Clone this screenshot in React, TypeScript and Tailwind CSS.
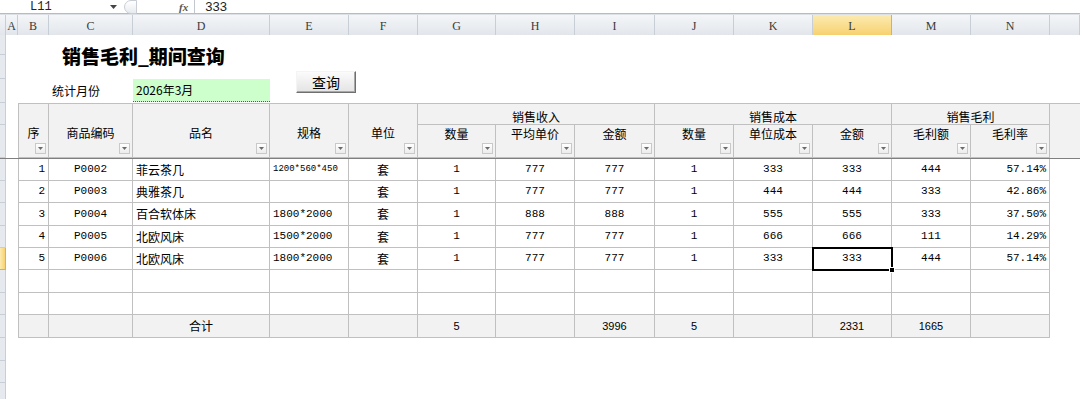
import React from 'react';

const TABLE_GRID =
  'grid grid-cols-[30px_84px_137px_79px_69px_78px_79px_80px_79px_79px_79px_79px_79px]';

const letters = ['', 'A', 'B', 'C', 'D', 'E', 'F', 'G', 'H', 'I', 'J', 'K', 'L', 'M', 'N', ''];

const rows: string[][] = [
  ['1', 'P0002', '菲云茶几', '1200*560*450', '套', '1', '777', '777', '1', '333', '333', '444', '57.14%'],
  ['2', 'P0003', '典雅茶几', '', '套', '1', '777', '777', '1', '444', '444', '333', '42.86%'],
  ['3', 'P0004', '百合软体床', '1800*2000', '套', '1', '888', '888', '1', '555', '555', '333', '37.50%'],
  ['4', 'P0005', '北欧风床', '1500*2000', '套', '1', '777', '777', '1', '666', '666', '111', '14.29%'],
  ['5', 'P0006', '北欧风床', '1800*2000', '套', '1', '777', '777', '1', '333', '333', '444', '57.14%'],
  ['', '', '', '', '', '', '', '', '', '', '', '', ''],
  ['', '', '', '', '', '', '', '', '', '', '', '', ''],
];

const totals = ['', '', '合计', '', '', '5', '', '3996', '5', '', '2331', '1665', ''];

const align = [
  'justify-end',
  'justify-center',
  'justify-start',
  'justify-start',
  'justify-center',
  'justify-center',
  'justify-center',
  'justify-center',
  'justify-center',
  'justify-center',
  'justify-center',
  'justify-center',
  'justify-end',
];

// heights of sheet rows below the frozen pane
const lowerHeights = ['h-[22px]', 'h-[22px]', 'h-[23px]', 'h-[22px]', 'h-[22px]', 'h-[23px]', 'h-[22px]', 'h-[23px]', 'h-[23px]', 'h-[22px]', 'h-[22px]'];
const upperHeights = ['h-[20px]', 'h-[24px]', 'h-[24px]', 'h-[22px]', 'h-[33px]'];

function FilterBtn() {
  return (
    <span className="absolute right-[2px] bottom-[3px] w-[11px] h-[11px] border border-[#c9c9c9] bg-gradient-to-b from-white to-[#ececec] flex items-center justify-center">
      <svg width="5" height="3" viewBox="0 0 5 3">
        <path d="M0 0H5L2.5 3Z" fill="#6b6b6b" />
      </svg>
    </span>
  );
}

function FormulaBar() {
  return (
    <div className="h-[14px] flex items-center border-b border-[#b4bcc6] bg-white">
      <div className="w-[110px] pl-[30px] font-['Liberation_Mono',monospace] text-[12px] leading-[12px] text-[#222]">L11</div>
      <svg width="7" height="4" viewBox="0 0 7 4" className="mt-[1px]">
        <path d="M0 0H7L3.5 4Z" fill="#444" />
      </svg>
      <div className="ml-[7px] w-[13px] h-[14px] rounded-l-full border border-[#c9ced5] bg-gradient-to-b from-white to-[#e8ebef]" />
      <div className="ml-[42px] font-['Liberation_Serif',serif] italic font-bold text-[11px] leading-[12px] text-[#555]">fx</div>
      <div className="ml-[6px] h-full border-l border-[#c3c8cf]" />
      <div className="ml-[10px] font-['Liberation_Sans',sans-serif] text-[13px] leading-[12px] text-[#222]">333</div>
    </div>
  );
}

function ColumnHeaders() {
  return (
    <div className="grid grid-cols-[6px_12px_31px_84px_137px_79px_69px_78px_79px_80px_79px_79px_79px_79px_79px_1fr] h-[21px] border-t border-[#dde1e6] border-b border-b-[#b9c0c9] font-['Liberation_Serif',serif] text-[12px] text-[#3b3b3b]">
      {letters.map((l, i) =>
        l === 'L' ? (
          <div key={i} className="flex items-center justify-center pt-[2px] border-r border-[#e3ad48] bg-gradient-to-b from-[#fcebb0] to-[#f7d16e]">
            {l}
          </div>
        ) : (
          <div key={i} className="flex items-center justify-center pt-[2px] border-r border-[#c8ced6] bg-gradient-to-b from-[#f4f6f8] to-[#e2e6eb]">
            {l}
          </div>
        ),
      )}
    </div>
  );
}

function TableHeader() {
  const singles = ['序', '商品编码', '品名', '规格', '单位'];
  const groups: [string, string][] = [
    ['销售收入', 'col-span-3'],
    ['销售成本', 'col-span-3'],
    ['销售毛利', 'col-span-2'],
  ];
  const subs = ['数量', '平均单价', '金额', '数量', '单位成本', '金额', '毛利额', '毛利率'];
  return (
    <div className={`${TABLE_GRID} grid-rows-[21px_33px] ml-[12px] border-l border-t border-[#c0c0c0] bg-[#f2f2f2] text-[12px] leading-[14px]`}>
      {singles.map((s) => (
        <div key={s} className="row-span-2 relative border-r border-b border-[#c0c0c0] text-center pt-[22px]">
          {s}
          <FilterBtn />
        </div>
      ))}
      {groups.map(([g, span]) => (
        <div key={g} className={`${span} border-r border-b border-[#c0c0c0] text-center pt-[6px]`}>
          {g}
        </div>
      ))}
      {subs.map((s, i) => (
        <div key={i} className="relative border-r border-b border-[#c0c0c0] text-center pt-[2px]">
          {s}
          <FilterBtn />
        </div>
      ))}
    </div>
  );
}

function cellFont(col: number, value: string) {
  if (col === 2 || col === 4) return "font-['Noto_Sans_CJK_SC',sans-serif] text-[12px]";
  if (value.length > 10) return "font-['Liberation_Mono',monospace] text-[9px]";
  return "font-['Liberation_Mono',monospace] text-[11px]";
}

function DataRow({ values, selected }: { values: string[]; selected?: boolean }) {
  return (
    <div className={`${TABLE_GRID} h-full border-l border-[#c0c0c0] bg-white`}>
      {values.map((v, c) => (
        <div
          key={c}
          className={`flex items-center ${align[c]} px-[3px] border-r border-b border-[#c0c0c0] ${cellFont(c, v)} ${selected && c === 10 ? 'relative' : ''}`}
        >
          {v}
          {selected && c === 10 && (
            <span className="absolute -left-[1px] -top-[1px] w-[81px] h-[24px] border-2 border-black">
              <span className="absolute -right-[4px] -bottom-[4px] w-[6px] h-[6px] bg-black border border-white" />
            </span>
          )}
        </div>
      ))}
    </div>
  );
}

function TotalRow() {
  return (
    <div className={`${TABLE_GRID} h-full border-l border-[#c0c0c0] bg-[#f2f2f2]`}>
      {totals.map((v, c) => (
        <div
          key={c}
          className={`flex items-center justify-center border-r border-b border-[#c0c0c0] ${c === 2 ? "font-['Noto_Sans_CJK_SC',sans-serif] text-[12px]" : "font-['Liberation_Sans',sans-serif] text-[11px]"}`}
        >
          {v}
        </div>
      ))}
    </div>
  );
}

function StripCell({ h, active }: { h: string; active?: boolean }) {
  return (
    <div
      className={`${h} w-[6px] shrink-0 border-r border-b ${active ? 'border-[#e3ad48] bg-gradient-to-r from-[#fcebb0] to-[#f7d16e]' : 'border-[#c8ced6] bg-[#e6e9ee]'}`}
    />
  );
}

function TopPane() {
  return (
    <div className="flex border-b border-[#7f7f7f]">
      <div className="flex flex-col">
        {upperHeights.map((h, i) => (
          <StripCell key={i} h={h} />
        ))}
      </div>
      <div className="flex-1 flex flex-col">
        <div className="h-[68px] flex">
          <div className="w-[290px] flex flex-col">
            <div className="h-[44px] pl-[56px] pt-[10px] text-[19px] leading-[22px] font-black">
              销售毛利_期间查询
            </div>
            <div className="h-[24px] flex items-start">
              <div className="w-[127px] pl-[46px] pt-[5px] text-[12px] leading-[14px]">统计月份</div>
              <div className="w-[137px] h-[23px] bg-[#ccffcc] border-b border-dotted border-[#555] pl-[3px] pt-[4px] text-[12px] leading-[14px]">
                2026年3月
              </div>
            </div>
          </div>
          <div className="mt-[36px] w-[60px] h-[22px] flex items-center justify-center border border-t-[#f4f4f4] border-l-[#f4f4f4] border-r-[#6f6f6f] border-b-[#6f6f6f] bg-gradient-to-b from-[#fbfbfb] to-[#e4e4e4] text-[14px] leading-[16px] shadow-[inset_-1px_-1px_0_#a8a8a8]">
            查询
          </div>
        </div>
        <TableHeader />
      </div>
    </div>
  );
}

function BottomPane() {
  return (
    <div className="flex flex-col">
      {lowerHeights.map((h, i) => (
        <div key={i} className={`flex ${h}`}>
          <StripCell h={h} active={i === 4} />
          <div className="w-[12px] shrink-0" />
          {i < 7 && (
            <div className="h-full">
              <DataRow values={rows[i]} selected={i === 4} />
            </div>
          )}
          {i === 7 && (
            <div className="h-full">
              <TotalRow />
            </div>
          )}
        </div>
      ))}
    </div>
  );
}

export default function App() {
  return (
    <div className="w-[1080px] h-[399px] overflow-hidden bg-white text-black font-['Noto_Sans_CJK_SC',sans-serif]">
      <FormulaBar />
      <ColumnHeaders />
      <TopPane />
      <BottomPane />
    </div>
  );
}
